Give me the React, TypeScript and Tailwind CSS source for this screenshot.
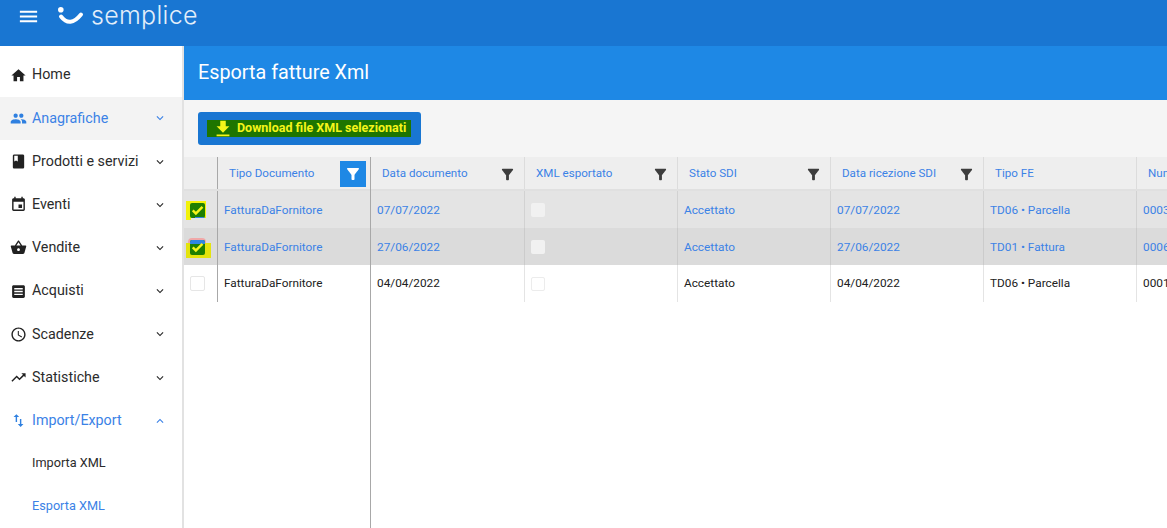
const P = {
  home: "M10 20v-6h4v6h5v-8h3L12 3 2 12h3v8z",
  people: "M16 11c1.66 0 2.99-1.34 2.99-3S17.66 5 16 5c-1.66 0-3 1.34-3 3s1.34 3 3 3zm-8 0c1.66 0 2.99-1.34 2.99-3S9.66 5 8 5C6.34 5 5 6.34 5 8s1.34 3 3 3zm0 2c-2.33 0-7 1.17-7 3.5V19h14v-2.5c0-2.33-4.67-3.5-7-3.5zm8 0c-.29 0-.62.02-.97.05 1.16.84 1.97 1.97 1.97 3.45V19h6v-2.5c0-2.33-4.67-3.5-7-3.5z",
  book: "M18 2H6c-1.1 0-2 .9-2 2v16c0 1.1.9 2 2 2h12c1.1 0 2-.9 2-2V4c0-1.1-.9-2-2-2zM6 4h5v8l-2.5-1.5L6 12V4z",
  event: "M17 12h-5v5h5v-5zM16 1v2H8V1H6v2H5c-1.11 0-1.99.9-1.99 2L3 19c0 1.1.89 2 2 2h14c1.1 0 2-.9 2-2V5c0-1.1-.9-2-2-2h-1V1h-2zm3 18H5V8h14v11z",
  basket: "M17.21 9l-4.38-6.56c-.19-.28-.51-.42-.83-.42-.32 0-.64.14-.83.43L6.79 9H2c-.55 0-1 .45-1 1 0 .09.01.18.04.27l2.54 9.27c.23.84 1 1.46 1.92 1.46h13c.92 0 1.69-.62 1.93-1.46l2.54-9.27L23 10c0-.55-.45-1-1-1h-4.79zM9 9l3-4.4L15 9H9zm3 8c-1.1 0-2-.9-2-2s.9-2 2-2 2 .9 2 2-.9 2-2 2z",
  list: "M19 3H5c-1.1 0-2 .9-2 2v14c0 1.1.9 2 2 2h14c1.1 0 2-.9 2-2V5c0-1.1-.9-2-2-2zm-1 14H6v-2h12v2zm0-4H6v-2h12v2zm0-4H6V7h12v2z",
  clock: "M11.99 2C6.47 2 2 6.48 2 12s4.47 10 9.99 10C17.52 22 22 17.52 22 12S17.52 2 11.99 2zM12 20c-4.42 0-8-3.58-8-8s3.58-8 8-8 8 3.58 8 8-3.58 8-8 8zm.5-13H11v6l5.25 3.15.75-1.23-4.5-2.67z",
  trend: "M16 6l2.29 2.29-4.88 4.88-4-4L2 16.59 3.41 18l6-6 4 4 6.3-6.29L22 12V6z",
  swap: "M9 3L5 6.99h3V14h2V6.99h3L9 3zm7 14.01V10h-2v7.01h-3L15 21l4-3.99h-3z",
  filter: "M4.25 5.61C6.27 8.2 10 13 10 13v6c0 .55.45 1 1 1h2c.55 0 1-.45 1-1v-6s3.72-4.8 5.74-7.39c.51-.66.04-1.61-.79-1.61H5.04c-.83 0-1.3.95-.79 1.61z",
  download: "M5 20h14v-2H5v2zM19 9h-4V3H9v6H5l7 7 7-7z",
  down: "M16.59 8.59L12 13.17 7.41 8.59 6 10l6 6 6-6z",
  up: "M12 8l-6 6 1.41 1.41L12 10.83l4.59 4.58L18 14z",
  menu: "M3 18h18v-2H3v2zm0-5h18v-2H3v2zm0-7v2h18V6H3z",
  check: "M9 16.17 4.83 12l-1.42 1.41L9 19 21 7l-1.41-1.41z",
};

function Icon({ d, className }: { d: string; className: string }) {
  return (
    <svg viewBox="0 0 24 24" className={className} fill="currentColor">
      <path d={d} />
    </svg>
  );
}

const BLUE = "text-[#3b82e6]";

function NavItem({ icon, label, chevron, active, bg, sub }: { icon?: string; label: string; chevron?: string; active?: boolean; bg?: boolean; sub?: boolean }) {
  return (
    <div className={`flex h-[43.2px] items-center pl-[10px] pr-[15px] ${bg ? "bg-[#f3f3f3]" : ""} ${active ? BLUE : "text-[#2b2b2b]"}`}>
      {icon ? (
        <Icon d={icon} className={`mr-[5px] size-[17px] ${active ? "text-[#2f80e0]" : "text-[#212121]"}`} />
      ) : (
        <span className="w-[22px]" />
      )}
      <span className={`flex-1 ${sub ? "mt-[-3px] text-[12.7px]" : "text-[14.3px]"}`}>{label}</span>
      {chevron && <Icon d={chevron} className="size-[14px]" />}
    </div>
  );
}

function Check({ on, hl }: { on: boolean; hl?: number }) {
  return (
    <div className="relative flex h-full w-full items-center pl-[6px]">
      {hl === 1 && <div className="absolute left-[2px] top-[10px] h-[19px] w-[5px] bg-[#f2f20a]" />}
      {hl === 1 && <div className="absolute left-[2px] top-[10px] h-[17px] w-[20px] bg-[#f2f20a]" />}
      {hl === 2 && <div className="absolute left-[4px] top-[10px] h-[19px] w-[18px] rounded-[4px] bg-[#f0a8a8]" />}
      {hl === 2 && <div className="absolute left-[2px] top-[15px] h-[15px] w-[25px] bg-[#e4e40d]" />}
      {on ? (
        <div className="relative mt-[1px] flex size-[15px] items-center justify-center overflow-hidden rounded-[2px] bg-[#1e7f00] text-[#f5f51a]">
          {hl === 2 && <div className="absolute left-0 top-0 h-[4px] w-full bg-[#2f86e0]" />}
          {hl === 1 && <div className="absolute bottom-0 right-0 h-[1px] w-[10px] bg-[#2f86e0]" />}
          <Icon d={P.check} className="relative size-[13px] stroke-current stroke-[2.5px]" />
        </div>
      ) : (
        <div className="size-[15px] rounded-[2px] border border-[#e6e6e6] bg-white" />
      )}
    </div>
  );
}

const columns = [
  { t: "Data documento", w: "w-[154px]" },
  { t: "XML esportato", w: "w-[153px]" },
  { t: "Stato SDI", w: "w-[153px]" },
  { t: "Data ricezione SDI", w: "w-[153px]" },
  { t: "Tipo FE", w: "w-[153px]", nofilter: true },
  { t: "Numero", w: "w-[153px]", nofilter: true },
];

const rows = [
  { bg: "bg-[#e4e4e4]", txt: BLUE, pad: "pt-[2px]", sep: "border-[#d2d2d2]", d: "07/07/2022", fe: "TD06 • Parcella", n: "0003", on: true, hl: 1 },
  { bg: "bg-[#dbdbdb]", txt: BLUE, pad: "pt-[2px]", sep: "border-[#cbcbcb]", d: "27/06/2022", fe: "TD01 • Fattura", n: "0006", on: true, hl: 2 },
  { bg: "bg-white", txt: "text-[#212121]", pad: "", sep: "border-[#e4e4e4]", d: "04/04/2022", fe: "TD06 • Parcella", n: "0001", on: false, hl: 0 },
];

export default function App() {
  return (
    <div className="flex h-[528px] w-[1167px] flex-col overflow-hidden bg-white font-['Roboto',sans-serif]">
      <header className="flex h-[46px] shrink-0 items-start bg-[#1976d2] text-white">
        <Icon d={P.menu} className="ml-[17px] mt-[5px] size-[23px]" />
        <svg viewBox="0 0 26 18" className="ml-[18px] mt-[7px] h-[18px] w-[26px]">
          <circle cx="2.8" cy="2.8" r="2.8" fill="#fff" />
          <path d="M3 9.5Q12 21 23 7.5" stroke="#fff" strokeWidth="4" strokeLinecap="round" fill="none" />
        </svg>
        <span className="ml-[7px] mt-[-1px] font-['Inter',sans-serif] text-[25px] font-light leading-[32px] tracking-[0.3px] text-[#e3eefa]">semplice</span>
      </header>
      <div className="flex min-h-0 flex-1">
        <nav className="w-[184px] shrink-0 border-r-2 border-[#e2e2e2] pt-[7.6px]">
          <NavItem icon={P.home} label="Home" />
          <NavItem icon={P.people} label="Anagrafiche" chevron={P.down} active bg />
          <NavItem icon={P.book} label="Prodotti e servizi" chevron={P.down} />
          <NavItem icon={P.event} label="Eventi" chevron={P.down} />
          <NavItem icon={P.basket} label="Vendite" chevron={P.down} />
          <NavItem icon={P.list} label="Acquisti" chevron={P.down} />
          <NavItem icon={P.clock} label="Scadenze" chevron={P.down} />
          <NavItem icon={P.trend} label="Statistiche" chevron={P.down} />
          <NavItem icon={P.swap} label="Import/Export" chevron={P.up} active />
          <NavItem label="Importa XML" sub />
          <NavItem label="Esporta XML" active sub />
        </nav>
        <main className="flex min-w-0 flex-1 flex-col">
          <div className="flex h-[54px] shrink-0 items-center bg-[#1e88e5] pl-[14px] text-[19.8px] text-white">Esporta fatture Xml</div>
          <div className="flex h-[57px] shrink-0 items-start bg-[#f5f5f5] pl-[14px] pt-[12px]">
            <div className="flex h-[33px] w-[223px] items-center rounded-[3px] bg-[#1976d2] pl-[9px]">
              <span className="flex h-[17px] w-[204px] items-center bg-[#1e7500] pl-[5px] text-[12.5px] font-bold text-[#f5f51a]">
                <Icon d={P.download} className="mr-[3px] size-[22px] shrink-0" />
                Download file XML selezionati
              </span>
            </div>
          </div>
          <div className="flex min-h-0 flex-1">
            <div className="w-[187px] shrink-0 border-r border-[#a8a8a8]">
              <div className="flex h-[34px] border-b-2 border-[#e0e0e0] bg-[#eeeeee]">
                <div className="w-[34px] border-r border-[#a8a8a8]" />
                <div className={`flex flex-1 items-center justify-between pl-[11px] pr-[4px] pt-[2px] text-[11.6px] ${BLUE}`}>
                  Tipo Documento
                  <div className="flex size-[26px] items-center justify-center bg-[#1e88e5]">
                    <Icon d={P.filter} className="size-[18px] text-white" />
                  </div>
                </div>
              </div>
              {rows.map((r) => (
                <div key={r.d} className={`flex h-[37px] ${r.bg}`}>
                  <div className="w-[34px] border-r border-[#a8a8a8]">
                    <Check on={r.on} hl={r.hl} />
                  </div>
                  <div className={`flex flex-1 items-center pl-[6px] text-[11.8px] ${r.pad} ${r.txt}`}>FatturaDaFornitore</div>
                </div>
              ))}
            </div>
            <div className="min-w-0 flex-1 overflow-hidden">
              <div className="flex h-[34px] w-[919px] border-b-2 border-[#e0e0e0] bg-[#eeeeee]">
                {columns.map((c) => (
                  <div key={c.t} className={`flex ${c.w} items-center justify-between border-r border-[#dcdcdc] pl-[11px] pr-[8px] pt-[2px] text-[11.6px] ${BLUE}`}>
                    {c.t}
                    {!c.nofilter && <Icon d={P.filter} className="size-[17px] text-[#3d3d3d]" />}
                  </div>
                ))}
              </div>
              {rows.map((r) => (
                <div key={r.d} className={`flex h-[37px] w-[919px] text-[11.8px] ${r.bg} ${r.txt}`}>
                  <div className={`flex w-[154px] items-center border-r pl-[6px] ${r.pad} ${r.sep}`}>{r.d}</div>
                  <div className={`flex w-[153px] items-center border-r pl-[6px] ${r.sep}`}>
                    <div className={`size-[14px] rounded-[2px] ${r.on ? "bg-[#f1f1f1]" : "border border-[#ececec] bg-white"}`} />
                  </div>
                  <div className={`flex w-[153px] items-center border-r pl-[6px] ${r.pad} ${r.sep}`}>Accettato</div>
                  <div className={`flex w-[153px] items-center border-r pl-[6px] ${r.pad} ${r.sep}`}>{r.d}</div>
                  <div className={`flex w-[153px] items-center border-r pl-[6px] ${r.pad} ${r.sep}`}>{r.fe}</div>
                  <div className={`flex w-[153px] items-center pl-[6px] ${r.pad}`}>{r.n}</div>
                </div>
              ))}
            </div>
          </div>
        </main>
      </div>
    </div>
  );
}
